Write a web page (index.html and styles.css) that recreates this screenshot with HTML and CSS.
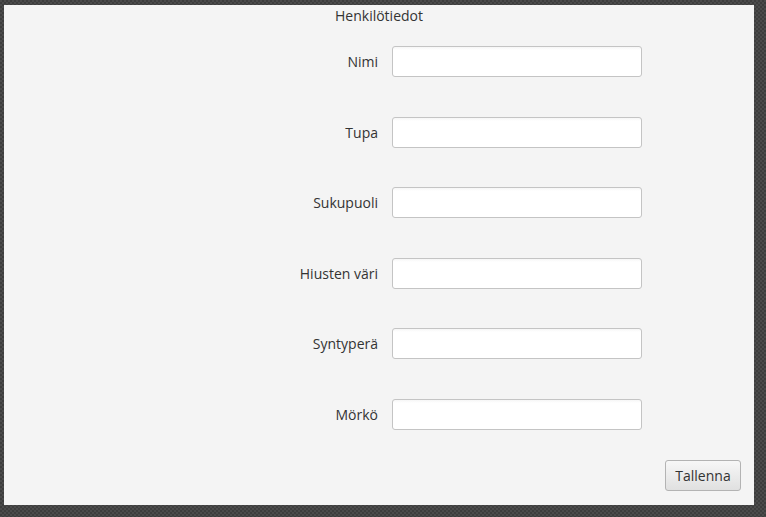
FILE: index.html
```html
<!DOCTYPE html>
<html lang="fi">
<head>
<meta charset="utf-8">
<title>Henkilötiedot</title>
<link rel="stylesheet" href="styles.css">
</head>
<body>
<div class="window">
  <div class="title">Henkilötiedot</div>
  <div class="form">
    <label class="label">Nimi</label><input class="field" type="text">
    <label class="label">Tupa</label><input class="field" type="text">
    <label class="label">Sukupuoli</label><input class="field" type="text">
    <label class="label">Hiusten väri</label><input class="field" type="text">
    <label class="label">Syntyperä</label><input class="field" type="text">
    <label class="label">Mörkö</label><input class="field" type="text">
  </div>
  <div class="footer">
    <button class="button" type="button">Tallenna</button>
  </div>
</div>
</body>
</html>
```

FILE: styles.css
```css
html, body {
  margin: 0;
  padding: 0;
  width: 766px;
  height: 517px;
  overflow: hidden;
}
body {
  background-color: #444;
  background-image: repeating-conic-gradient(#3d3d3d 0 25%, #4b4b4b 0 50%);
  background-size: 4px 4px;
  font-family: "Open Sans", "Noto Sans", sans-serif;
  font-size: 14px;
  color: #333;
}
.window {
  margin: 5px 0 0 4px;
  width: 750px;
  height: 500px;
  background: #f4f4f4;
  display: flex;
  flex-direction: column;
}
.title {
  text-align: center;
  line-height: 20px;
  padding-top: 1px;
  height: 21px;
}
.form {
  margin: 19px 0 0 274px;
  display: grid;
  grid-template-columns: 100px 250px;
  grid-auto-rows: 31px;
  column-gap: 14px;
  row-gap: 39.6px;
  align-items: center;
}
.label {
  text-align: right;
}
.field {
  box-sizing: border-box;
  width: 250px;
  height: 31px;
  margin: 0;
  border: 1px solid #c4c4c4;
  border-radius: 3px;
  background: linear-gradient(#f6f6f6, #ffffff 3px);
  font: inherit;
  padding: 0 6px;
  outline: none;
}
.footer {
  margin-top: auto;
  display: flex;
  justify-content: flex-end;
  padding: 0 13px 14px 0;
}
.button {
  box-sizing: border-box;
  width: 76px;
  height: 31px;
  border: 1px solid #b3b3b3;
  border-radius: 3px;
  background: linear-gradient(#f7f7f7, #e0e0e0);
  font: inherit;
  font-size: 14px;
  color: #333;
  padding: 0;
}
```
